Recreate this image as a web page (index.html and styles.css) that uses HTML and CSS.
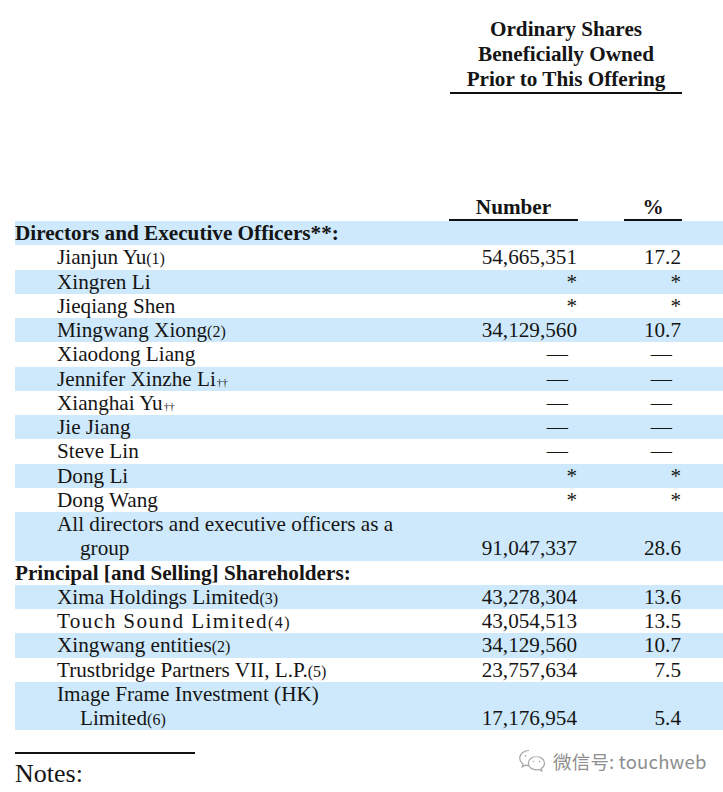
FILE: index.html
```html
<!DOCTYPE html>
<html>
<head>
<meta charset="utf-8">
<link rel="stylesheet" href="styles.css">
</head>
<body>
<div class="page">
  <div class="top">
    <div class="top-head">Ordinary Shares<br>Beneficially Owned<br>Prior to This Offering</div>
  </div>
  <div class="row colhead">
    <div class="lbl"></div>
    <div class="num"><span class="uline num-u">Number</span></div>
    <div class="sp"></div>
    <div class="pct"><span class="uline pct-u">%</span></div>
  </div>
  <div class="row band"><div class="lbl sec">Directors and Executive Officers**:</div><div class="num"></div><div class="sp"></div><div class="pct"></div></div>
  <div class="row"><div class="lbl">Jianjun Yu<span class="fn">(1)</span></div><div class="num">54,665,351</div><div class="sp"></div><div class="pct">17.2</div></div>
  <div class="row band"><div class="lbl">Xingren Li</div><div class="num">*</div><div class="sp"></div><div class="pct">*</div></div>
  <div class="row"><div class="lbl">Jieqiang Shen</div><div class="num">*</div><div class="sp"></div><div class="pct">*</div></div>
  <div class="row band"><div class="lbl">Mingwang Xiong<span class="fn">(2)</span></div><div class="num">34,129,560</div><div class="sp"></div><div class="pct">10.7</div></div>
  <div class="row"><div class="lbl">Xiaodong Liang</div><div class="num dash">—</div><div class="sp"></div><div class="pct dash">—</div></div>
  <div class="row band"><div class="lbl">Jennifer Xinzhe Li<span class="dag">††</span></div><div class="num dash">—</div><div class="sp"></div><div class="pct dash">—</div></div>
  <div class="row"><div class="lbl">Xianghai Yu<span class="dag">††</span></div><div class="num dash">—</div><div class="sp"></div><div class="pct dash">—</div></div>
  <div class="row band"><div class="lbl">Jie Jiang</div><div class="num dash">—</div><div class="sp"></div><div class="pct dash">—</div></div>
  <div class="row"><div class="lbl">Steve Lin</div><div class="num dash">—</div><div class="sp"></div><div class="pct dash">—</div></div>
  <div class="row band"><div class="lbl">Dong Li</div><div class="num">*</div><div class="sp"></div><div class="pct">*</div></div>
  <div class="row"><div class="lbl">Dong Wang</div><div class="num">*</div><div class="sp"></div><div class="pct">*</div></div>
  <div class="row band"><div class="lbl hang">All directors and executive officers as a<br>group</div><div class="num">91,047,337</div><div class="sp"></div><div class="pct">28.6</div></div>
  <div class="row"><div class="lbl sec">Principal [and Selling] Shareholders:</div><div class="num"></div><div class="sp"></div><div class="pct"></div></div>
  <div class="row band"><div class="lbl">Xima Holdings Limited<span class="fn">(3)</span></div><div class="num">43,278,304</div><div class="sp"></div><div class="pct">13.6</div></div>
  <div class="row"><div class="lbl wide">Touch Sound Limited<span class="fn">(4)</span></div><div class="num">43,054,513</div><div class="sp"></div><div class="pct">13.5</div></div>
  <div class="row band"><div class="lbl">Xingwang entities<span class="fn">(2)</span></div><div class="num">34,129,560</div><div class="sp"></div><div class="pct">10.7</div></div>
  <div class="row"><div class="lbl">Trustbridge Partners VII, L.P.<span class="fn">(5)</span></div><div class="num">23,757,634</div><div class="sp"></div><div class="pct">7.5</div></div>
  <div class="row band"><div class="lbl hang">Image Frame Investment (HK)<br>Limited<span class="fn">(6)</span></div><div class="num">17,176,954</div><div class="sp"></div><div class="pct">5.4</div></div>

  <div class="rule"></div>
  <div class="notes">Notes:</div>

  <div class="wm">
    <svg class="wm-icon" width="30" height="26" viewBox="0 0 30 26" fill="none" stroke="#a5a5a5" stroke-width="1.2">
      <path d="M12 2.5c-5.2 0-9.3 3.4-9.3 7.6 0 2.4 1.3 4.5 3.4 5.9l-.9 2.8 3.3-1.7c1.1.3 2.3.5 3.5.5"/>
      <path d="M19.5 8.5c-4.6 0-8.2 3-8.2 6.7s3.6 6.7 8.2 6.7c.9 0 1.8-.1 2.6-.4l2.8 1.5-.7-2.4c2-1.2 3.3-3.2 3.3-5.4 0-3.7-3.6-6.7-8-6.7z"/>
      <circle cx="8.5" cy="7.8" r="0.9" fill="#a5a5a5" stroke="none"/>
      <circle cx="16.5" cy="13.5" r="0.8" fill="#a5a5a5" stroke="none"/>
      <circle cx="22.5" cy="13.5" r="0.8" fill="#a5a5a5" stroke="none"/>
    </svg>
    <span class="wm-text">微信号: touchweb</span>
  </div>
</div>
</body>
</html>
```

FILE: styles.css
```css
html, body {
  margin: 0;
  padding: 0;
  background: #ffffff;
}

.page {
  position: relative;
  width: 723px;
  height: 792px;
  overflow: hidden;
  padding-left: 15px;
  box-sizing: border-box;
  font-family: "Liberation Serif", "Times New Roman", serif;
  font-size: 21.2px;
  color: #151515;
}

.top {
  display: flex;
  padding-top: 17px;
  padding-left: 435px;
  height: 195px;
  box-sizing: border-box;
}

.top-head {
  width: 232px;
  text-align: center;
  font-weight: bold;
  line-height: 25px;
  border-bottom: 2px solid #111;
  height: 75px;
}

.row {
  display: grid;
  grid-template-columns: 434px 129px 46px 58px 41px;
  align-items: end;
  line-height: 24.25px;
  width: 708px;
}

.band {
  background: #cee9fb;
}

.colhead {
  line-height: 24px;
}

.uline {
  display: block;
  text-align: center;
  font-weight: bold;
  border-bottom: 2px solid #111;
}

.lbl {
  padding-left: 42px;
  white-space: nowrap;
}

.lbl.sec {
  padding-left: 0;
  font-weight: bold;
}

.lbl.hang {
  padding-left: 65px;
  text-indent: -23px;
}

.lbl.wide {
  letter-spacing: 1.4px;
}

.num,
.pct {
  text-align: right;
  padding-right: 1px;
  white-space: nowrap;
}

.colhead .num,
.colhead .pct {
  padding-right: 0;
}

.dash {
  padding-right: 10px;
}

.fn {
  font-size: 16px;
  line-height: 1;
}

.dag {
  font-size: 11px;
  line-height: 1;
  margin-left: 1px;
}

.rule {
  width: 180px;
  height: 2px;
  background: #111;
  margin-top: 22px;
}

.notes {
  font-size: 26px;
  line-height: 30px;
  margin-top: 5px;
}

.wm {
  position: absolute;
  left: 517px;
  top: 748px;
  display: flex;
  align-items: center;
  gap: 6px;
}

.wm-text {
  font-family: "Noto Sans CJK SC", "Noto Sans", sans-serif;
  font-size: 18.5px;
  color: #8e8e8e;
  text-shadow: 0 0 2px #ffffff;
  letter-spacing: 0.2px;
}
```
